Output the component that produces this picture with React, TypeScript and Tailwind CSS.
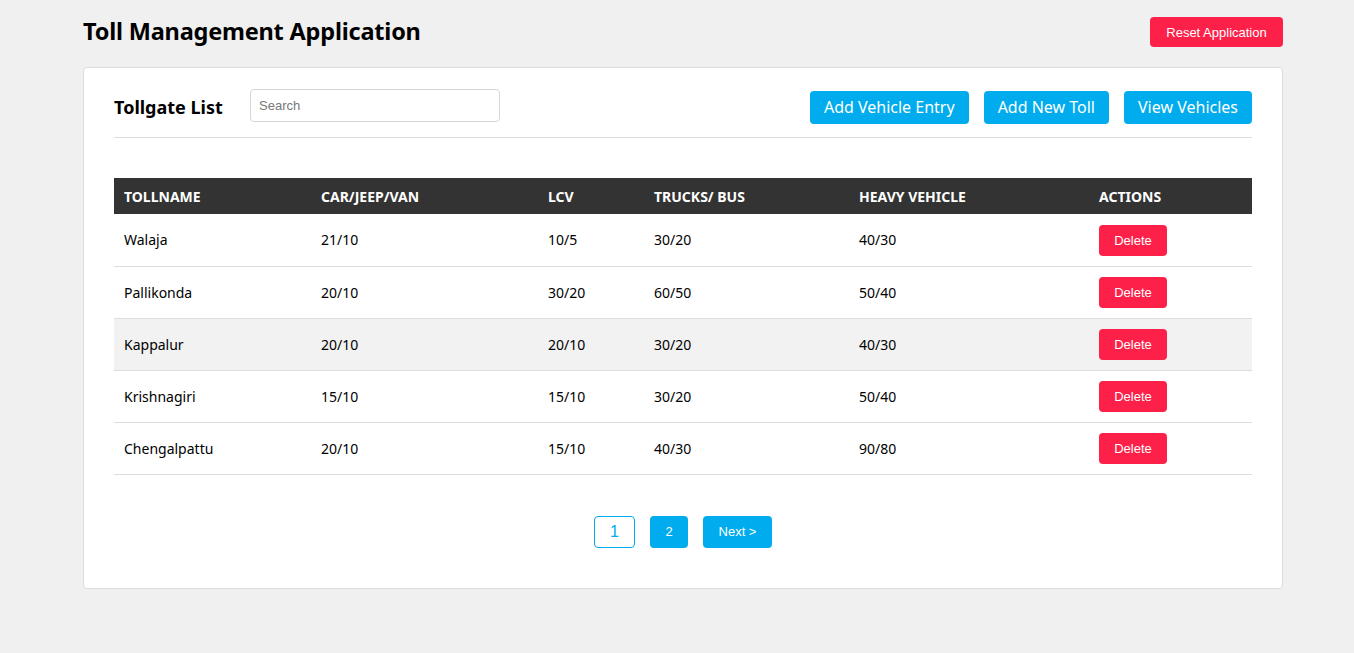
import React from 'react';

type TollRow = {
    name: string;
    car: string;
    lcv: string;
    truck: string;
    heavy: string;
};

const tolls: TollRow[] = [
    { name: 'Walaja', car: '21/10', lcv: '10/5', truck: '30/20', heavy: '40/30' },
    { name: 'Pallikonda', car: '20/10', lcv: '30/20', truck: '60/50', heavy: '50/40' },
    { name: 'Kappalur', car: '20/10', lcv: '20/10', truck: '30/20', heavy: '40/30' },
    { name: 'Krishnagiri', car: '15/10', lcv: '15/10', truck: '30/20', heavy: '50/40' },
    { name: 'Chengalpattu', car: '20/10', lcv: '15/10', truck: '40/30', heavy: '90/80' }
];

const ubuntu = "font-['Noto_Sans','DejaVu_Sans',sans-serif]";
const arial = "font-['Liberation_Sans',Arial,sans-serif]";

const App: React.FC = () => {
    return (
        <div className={`min-h-screen bg-[#f0f0f0] ${ubuntu} text-black`}>
            <div className="w-[1200px] ml-[83px] pt-[17px] pb-10">
                <div className="flex items-center justify-between h-[30px]">
                    <h1 className="text-[23.5px] font-bold leading-none tracking-[-0.2px]">Toll Management Application</h1>
                    <button className={`h-[30px] w-[133px] pt-px rounded bg-[#fd2149] text-white text-[13px] ${arial}`}>
                        Reset Application
                    </button>
                </div>

                <div className="mt-5 bg-white border border-[#dddddd] rounded px-[30px] pt-[21px] pb-10">
                    <div className="flex items-center justify-between h-[36px] border-b border-[#dddddd] box-content pb-3">
                        <div className="flex items-center">
                            <h2 className="text-[18px] font-bold w-[136px]">Tollgate List</h2>
                            <input
                                type="text"
                                placeholder="Search"
                                className={`w-[250px] h-[33px] px-2 mb-[3px] border border-[#d6d6d6] rounded text-[13px] ${arial} placeholder:text-[#777] outline-none`}
                            />
                        </div>
                        <div className="flex items-center gap-[15px]">
                            <button className="h-[33px] px-[14px] rounded bg-[#00aced] text-white text-[16px]">Add Vehicle Entry</button>
                            <button className="h-[33px] px-[14px] rounded bg-[#00aced] text-white text-[16px]">Add New Toll</button>
                            <button className="h-[33px] px-[14px] rounded bg-[#00aced] text-white text-[16px]">View Vehicles</button>
                        </div>
                    </div>

                    <table className="w-full mt-10 table-fixed border-collapse text-[14px]">
                        <colgroup>
                            <col className="w-[197px]" />
                            <col className="w-[227px]" />
                            <col className="w-[106px]" />
                            <col className="w-[205px]" />
                            <col className="w-[240px]" />
                            <col />
                        </colgroup>
                        <thead>
                            <tr className="bg-[#333333] text-white h-[36px]">
                                <th className="text-left font-bold px-[10px]">TOLLNAME</th>
                                <th className="text-left font-bold px-[10px]">CAR/JEEP/VAN</th>
                                <th className="text-left font-bold px-[10px]">LCV</th>
                                <th className="text-left font-bold px-[10px]">TRUCKS/ BUS</th>
                                <th className="text-left font-bold px-[10px]">HEAVY VEHICLE</th>
                                <th className="text-left font-bold px-[10px]">ACTIONS</th>
                            </tr>
                        </thead>
                        <tbody>
                            {tolls.map((t, i) => (
                                <tr key={t.name} className={`h-[52px] border-b border-[#dddddd] ${i === 2 ? 'bg-[#f2f2f2]' : 'bg-white'}`}>
                                    <td className="px-[10px]">{t.name}</td>
                                    <td className="px-[10px]">{t.car}</td>
                                    <td className="px-[10px]">{t.lcv}</td>
                                    <td className="px-[10px]">{t.truck}</td>
                                    <td className="px-[10px]">{t.heavy}</td>
                                    <td className="px-[10px]">
                                        <button className={`h-[31px] w-[68px] pt-px mt-px rounded bg-[#fd2149] text-white text-[13px] ${arial}`}>
                                            Delete
                                        </button>
                                    </td>
                                </tr>
                            ))}
                        </tbody>
                    </table>

                    <div className={`flex justify-center gap-[15px] mt-[41px] ${arial}`}>
                        <button className="h-[32px] w-[41px] rounded border border-[#00aced] bg-white text-[#00aced] text-[16px]">1</button>
                        <button className="h-[32px] w-[38px] rounded bg-[#00aced] text-white text-[13px]">2</button>
                        <button className="h-[32px] w-[69px] rounded bg-[#00aced] text-white text-[13px]">Next &gt;</button>
                    </div>
                </div>
            </div>
        </div>
    );
};

export default App;
